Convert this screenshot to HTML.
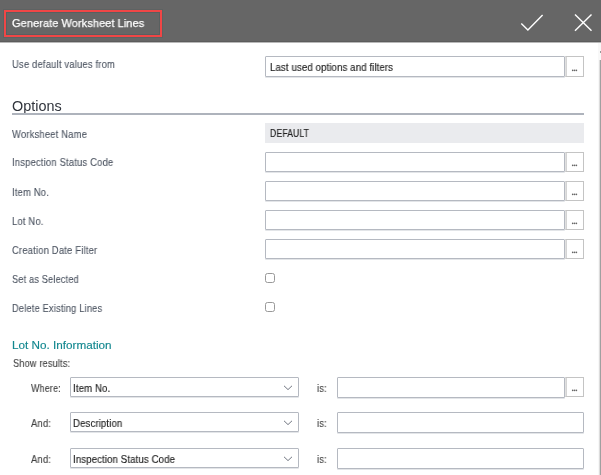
<!DOCTYPE html>
<html><head><meta charset="utf-8">
<style>
html,body{margin:0;padding:0;}
body{width:601px;height:475px;overflow:hidden;background:#fff;position:relative;font-family:"Liberation Sans",sans-serif;}
.t{position:absolute;white-space:pre;line-height:14px;transform-origin:0 0;will-change:transform;}
#hdr{position:absolute;left:0;top:0;width:601px;height:42px;background:#666;border-bottom:1px solid #b8b8b8;box-shadow:inset 0 -1px 0 #5c5c5c;}
#redbox{position:absolute;left:4px;top:10px;width:158px;height:27px;box-sizing:border-box;border:2px solid #f04646;box-shadow:0 0 0 1px #5d6262, inset 0 0 0 1px #586060;}
.inp{position:absolute;box-sizing:border-box;border:1px solid #b5b9c1;background:#fff;border-radius:1px;box-shadow:0 1px 0 rgba(175,180,188,0.35);}
.btn{position:absolute;left:565px;width:19px;height:20px;box-sizing:border-box;border:1px solid #c4c4c4;border-left-color:#e0e0e0;box-shadow:inset 1px 0 0 #d4d4d4;background:#fff;}
.cb{position:absolute;left:265px;width:10px;height:10px;box-sizing:border-box;border:1.4px solid #999;border-radius:2.5px;}
</style></head><body>
<div id="hdr"></div>
<div id="redbox"></div>
<div class="t" style="left:12px;top:16.12px;font-size:11.5px;color:#fff;transform:scaleX(0.96);-webkit-text-stroke:0.25px #fff;letter-spacing:0.05px;">Generate Worksheet Lines</div>
<svg style="position:absolute;left:0;top:0" width="601" height="42">
<polyline points="521.3,23.4 527.9,30 542.6,14.9" fill="none" stroke="#fff" stroke-width="1.4"/>
<line x1="575" y1="14.6" x2="591.5" y2="30.8" stroke="#fff" stroke-width="1.4"/>
<line x1="591.5" y1="14.6" x2="575" y2="30.8" stroke="#fff" stroke-width="1.4"/>
</svg>
<div class="t" style="left:12px;top:57.97px;font-size:10.2px;color:#4b5360;transform:scaleX(0.92);-webkit-text-stroke:0.1px #4b5360;letter-spacing:0.22px;">Use default values from</div>
<div class="inp" style="left:265px;top:56px;width:300px;height:21px"></div>
<div class="btn" style="top:56px;height:21px"></div><svg style="position:absolute;left:565px;top:56px" width="19" height="21"><circle cx="7.7" cy="14.3" r="0.85" fill="#666"/><circle cx="9.55" cy="14.3" r="0.85" fill="#666"/><circle cx="11.4" cy="14.3" r="0.85" fill="#666"/></svg>
<div class="t" style="left:270px;top:61.27px;font-size:10.2px;color:#222;transform:scaleX(0.945);-webkit-text-stroke:0.15px #222;letter-spacing:0.12px;">Last used options and filters</div>
<div class="t" style="left:12px;top:99px;font-size:14.4px;color:#30343c">Options</div>
<div style="position:absolute;left:12px;top:113px;width:572px;height:2px;background:#aeb3bc"></div>
<div class="t" style="left:12px;top:127.57px;font-size:10.2px;color:#4b5360;transform:scaleX(0.92);-webkit-text-stroke:0.1px #4b5360;letter-spacing:0.22px;">Worksheet Name</div>
<div style="position:absolute;left:265px;top:123px;width:319px;height:20px;background:#eaebee"></div>
<div class="t" style="left:269.7px;top:127.37px;font-size:10.2px;color:#222;transform:scaleX(0.85);-webkit-text-stroke:0.15px #222;letter-spacing:0.12px;">DEFAULT</div>
<div class="t" style="left:12px;top:156.27px;font-size:10.2px;color:#4b5360;transform:scaleX(0.92);-webkit-text-stroke:0.1px #4b5360;letter-spacing:0.22px;">Inspection Status Code</div>
<div class="inp" style="left:265px;top:152px;width:300px;height:20px"></div>
<div class="btn" style="top:152px;height:20px"></div><svg style="position:absolute;left:565px;top:152px" width="19" height="20"><circle cx="7.7" cy="13.3" r="0.85" fill="#666"/><circle cx="9.55" cy="13.3" r="0.85" fill="#666"/><circle cx="11.4" cy="13.3" r="0.85" fill="#666"/></svg>
<div class="t" style="left:12px;top:185.57px;font-size:10.2px;color:#4b5360;transform:scaleX(0.92);-webkit-text-stroke:0.1px #4b5360;letter-spacing:0.22px;">Item No.</div>
<div class="inp" style="left:265px;top:181px;width:300px;height:20px"></div>
<div class="btn" style="top:181px;height:20px"></div><svg style="position:absolute;left:565px;top:181px" width="19" height="20"><circle cx="7.7" cy="13.3" r="0.85" fill="#666"/><circle cx="9.55" cy="13.3" r="0.85" fill="#666"/><circle cx="11.4" cy="13.3" r="0.85" fill="#666"/></svg>
<div class="t" style="left:12px;top:214.77px;font-size:10.2px;color:#4b5360;transform:scaleX(0.92);-webkit-text-stroke:0.1px #4b5360;letter-spacing:0.22px;">Lot No.</div>
<div class="inp" style="left:265px;top:210px;width:300px;height:20px"></div>
<div class="btn" style="top:210px;height:20px"></div><svg style="position:absolute;left:565px;top:210px" width="19" height="20"><circle cx="7.7" cy="13.3" r="0.85" fill="#666"/><circle cx="9.55" cy="13.3" r="0.85" fill="#666"/><circle cx="11.4" cy="13.3" r="0.85" fill="#666"/></svg>
<div class="t" style="left:12px;top:243.97px;font-size:10.2px;color:#4b5360;transform:scaleX(0.92);-webkit-text-stroke:0.1px #4b5360;letter-spacing:0.22px;">Creation Date Filter</div>
<div class="inp" style="left:265px;top:239px;width:300px;height:20px"></div>
<div class="btn" style="top:239px;height:20px"></div><svg style="position:absolute;left:565px;top:239px" width="19" height="20"><circle cx="7.7" cy="13.3" r="0.85" fill="#666"/><circle cx="9.55" cy="13.3" r="0.85" fill="#666"/><circle cx="11.4" cy="13.3" r="0.85" fill="#666"/></svg>
<div class="t" style="left:12px;top:273.27px;font-size:10.2px;color:#4b5360;transform:scaleX(0.895);-webkit-text-stroke:0.1px #4b5360;letter-spacing:0.22px;">Set as Selected</div>
<div class="cb" style="top:273px"></div>
<div class="t" style="left:12px;top:302.27px;font-size:10.2px;color:#4b5360;transform:scaleX(0.905);-webkit-text-stroke:0.1px #4b5360;letter-spacing:0.22px;">Delete Existing Lines</div>
<div class="cb" style="top:302px"></div>
<div class="t" style="left:12.4px;top:338.28px;font-size:11.6px;color:#12878f;transform:scaleX(1.01);-webkit-text-stroke:0.15px #12878f;">Lot No. Information</div>
<div class="t" style="left:12.5px;top:357.27px;font-size:10.2px;color:#404040;transform:scaleX(0.895);-webkit-text-stroke:0.12px #404040;letter-spacing:0.22px;">Show results:</div>
<div class="t" style="left:31px;top:381.57px;font-size:10.2px;color:#404040;transform:scaleX(0.875);-webkit-text-stroke:0.12px #404040;letter-spacing:0.22px;">Where:</div>
<div class="inp" style="left:70px;top:377px;width:229px;height:20px"></div>
<div class="t" style="left:72.8px;top:381.57px;font-size:10.2px;color:#222;transform:scaleX(0.945);-webkit-text-stroke:0.15px #222;letter-spacing:0.12px;">Item No.</div>
<div class="t" style="left:316.6px;top:381.57px;font-size:10.2px;color:#404040;transform:scaleX(0.92);-webkit-text-stroke:0.12px #404040;letter-spacing:0.22px;">is:</div>
<div class="inp" style="left:337px;top:377px;width:228px;height:21px"></div>
<div class="btn" style="top:377px;height:20px"></div><svg style="position:absolute;left:565px;top:377px" width="19" height="20"><circle cx="7.7" cy="13.3" r="0.85" fill="#666"/><circle cx="9.55" cy="13.3" r="0.85" fill="#666"/><circle cx="11.4" cy="13.3" r="0.85" fill="#666"/></svg>
<div class="t" style="left:31px;top:417.37px;font-size:10.2px;color:#404040;transform:scaleX(0.92);-webkit-text-stroke:0.12px #404040;letter-spacing:0.22px;">And:</div>
<div class="inp" style="left:70px;top:412px;width:229px;height:20px"></div>
<div class="t" style="left:72.8px;top:417.37px;font-size:10.2px;color:#222;transform:scaleX(0.945);-webkit-text-stroke:0.15px #222;letter-spacing:0.12px;">Description</div>
<div class="t" style="left:316.6px;top:417.37px;font-size:10.2px;color:#404040;transform:scaleX(0.92);-webkit-text-stroke:0.12px #404040;letter-spacing:0.22px;">is:</div>
<div class="inp" style="left:337px;top:412px;width:247px;height:21px"></div>
<div class="t" style="left:31px;top:452.67px;font-size:10.2px;color:#404040;transform:scaleX(0.92);-webkit-text-stroke:0.12px #404040;letter-spacing:0.22px;">And:</div>
<div class="inp" style="left:70px;top:448px;width:229px;height:20px"></div>
<div class="t" style="left:72.8px;top:452.67px;font-size:10.2px;color:#222;transform:scaleX(0.945);-webkit-text-stroke:0.15px #222;letter-spacing:0.12px;">Inspection Status Code</div>
<div class="t" style="left:316.6px;top:452.67px;font-size:10.2px;color:#404040;transform:scaleX(0.92);-webkit-text-stroke:0.12px #404040;letter-spacing:0.22px;">is:</div>
<div class="inp" style="left:337px;top:448px;width:247px;height:21px"></div>
<svg style="position:absolute;left:0;top:370px" width="601" height="105">
<polyline points="284,15.8 288,19.6 292,15.8" fill="none" stroke="#707580" stroke-width="1"/>
<polyline points="284,50.8 288,54.6 292,50.8" fill="none" stroke="#707580" stroke-width="1"/>
<polyline points="284,86.8 288,90.6 292,86.8" fill="none" stroke="#707580" stroke-width="1"/>
</svg>
<div style="position:absolute;left:598px;top:43px;width:3px;height:432px;background:#f8f8f8"></div>
<div style="position:absolute;left:600px;top:51px;width:1px;height:2px;background:#999"></div>
<div style="position:absolute;left:599px;top:60px;width:1px;height:415px;background:#dcdcdc"></div>
<div style="position:absolute;left:600px;top:60px;width:1px;height:415px;background:#a0a0a0"></div>
</body></html>
